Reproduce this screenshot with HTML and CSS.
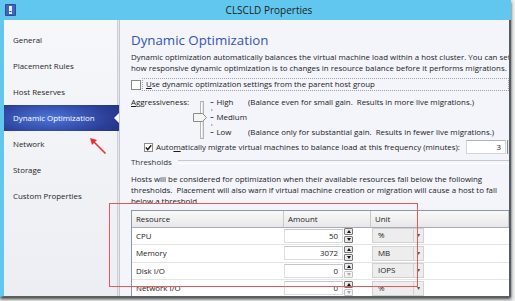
FILE: index.html
```html
<!DOCTYPE html>
<html lang="en">
<head>
  <meta charset="UTF-8" />
  <title>CLSCLD Properties</title>
  <link rel="stylesheet" href="styles.css">
</head>
<body>

  <div class="window">
    <div class="titlebar">
      <svg class="app-icon" width="11" height="12" viewBox="0 0 11 12">
        <rect x="0" y="0" width="11" height="12" rx="1" fill="#2c4d9e"/>
        <rect x="1" y="1" width="9" height="10" fill="#3f66c0"/>
        <rect x="4" y="2" width="3" height="8" fill="#e8eefa"/>
        <rect x="4.5" y="7" width="2" height="1" fill="#2c4d9e"/>
      </svg>
      <div class="title">CLSCLD Properties</div>
    </div>

    <div class="frame">
      <nav class="sidebar">
        <a href="#">General</a>
        <a href="#">Placement Rules</a>
        <a href="#">Host Reserves</a>
        <a href="#" class="active">Dynamic Optimization</a>
        <a href="#">Network</a>
        <a href="#">Storage</a>
        <a href="#">Custom Properties</a>
      </nav>
      <div class="splitter"></div>

      <main class="content">
        <h1>Dynamic Optimization</h1>
        <p class="intro">Dynamic optimization automatically balances the virtual machine load within a host cluster. You can set<br>how responsive dynamic optimization is to changes in resource balance before it performs migrations.</p>

        <div class="check-row">
          <span class="box"></span>
          <span class="focus"><u>U</u>se dynamic optimization settings from the parent host group</span>
        </div>

        <div class="aggr">
          <div class="aggr-label"><u>A</u>ggressiveness:</div>
          <svg class="slider" width="22" height="44" viewBox="0 0 22 44">
            <rect x="7.5" y="6.5" width="3" height="37" fill="#e4e4e4" stroke="#b4b4b4"/>
            <line x1="8.5" y1="7.5" x2="8.5" y2="42.5" stroke="#fff"/>
            <line x1="17.5" y1="7.5" x2="20.5" y2="7.5" stroke="#555"/>
            <line x1="18" y1="15" x2="19.5" y2="15" stroke="#777"/>
            <line x1="17.5" y1="22.5" x2="20.5" y2="22.5" stroke="#555"/>
            <line x1="18" y1="30" x2="19.5" y2="30" stroke="#777"/>
            <line x1="17.5" y1="37.5" x2="20.5" y2="37.5" stroke="#555"/>
            <polygon points="0.5,18.5 9.5,18.5 13.5,22.5 9.5,26.5 0.5,26.5" fill="#f4f4f4" stroke="#8a8a8a"/>
          </svg>
          <div class="levels">
            <div class="level"><span class="lvl">High</span><span>(Balance even for small gain.&nbsp; Results in more live migrations.)</span></div>
            <div class="level"><span class="lvl">Medium</span></div>
            <div class="level"><span class="lvl">Low</span><span>(Balance only for substantial gain.&nbsp; Results in fewer live migrations.)</span></div>
          </div>
        </div>

        <div class="auto-row">
          <span class="box checked">
            <svg width="7" height="7" viewBox="0 0 7 7"><polyline points="0.8,3.6 2.7,5.6 6.2,1.2" fill="none" stroke="#1a1a1a" stroke-width="1.4"/></svg>
          </span>
          <span>Auto<u>m</u>atically migrate virtual machines to balance load at this frequency (minutes):</span>
          <span class="freq">3</span>
          <span class="freq-spin"></span>
        </div>

        <div class="legend">Thresholds</div>

        <p class="hosts">Hosts will be considered for optimization when their available resources fall below the following<br>thresholds.&nbsp; Placement will also warn if virtual machine creation or migration will cause a host to fall<br>below a threshold.</p>

        <div class="grid" id="thresholds">
          <div class="th">Resource</div>
          <div class="th">Amount</div>
          <div class="th">Unit</div>
        </div>
      </main>
    </div>
  </div>

  <div class="highlight"></div>
  <svg class="arrow" width="24" height="24" viewBox="0 0 24 24">
    <line x1="19.5" y1="19.5" x2="7" y2="7" stroke="#e8322e" stroke-width="1.6"/>
    <polygon points="4,4 11,6 6,11" fill="#e8322e"/>
  </svg>

<script>
  const rows = [
    { name: 'CPU', amount: 50, unit: '%' },
    { name: 'Memory', amount: 3072, unit: 'MB' },
    { name: 'Disk I/O', amount: 0, unit: 'IOPS' },
    { name: 'Network I/O', amount: 0, unit: '%' }
  ];
  const grid = document.getElementById('thresholds');

  rows.forEach(row => {
    const atMin = row.amount === 0 ? ' disabled' : '';
    grid.insertAdjacentHTML('beforeend', `
      <div class="td">${row.name}</div>
      <div class="td amount">
        <span class="num">${row.amount}</span>
        <span class="spin${atMin}"><i class="up"></i><i class="down"></i></span>
      </div>
      <div class="td unit">
        <span class="combo"><span class="val">${row.unit}</span><span class="drop">&#9662;</span></span>
      </div>
    `);
  });
</script>

</body>
</html>
```

FILE: styles.css
```css
* {
  margin: 0;
  padding: 0;
  box-sizing: border-box;
}

body {
  width: 515px;
  height: 301px;
  overflow: hidden;
  position: relative;
  background: #eceded;
  font-family: "Open Sans", sans-serif;
  font-size: 7.9px;
  color: #1a1a1a;
}

.window {
  width: 511px;
  height: 297px;
  display: flex;
  flex-direction: column;
  background: #62c7ee;
  box-shadow: 0 2px 3px rgba(30, 34, 30, 0.85);
}

.titlebar {
  height: 20px;
  display: flex;
  align-items: center;
  padding-left: 5px;
}

.title {
  flex: 1;
  text-align: center;
  padding-left: 11px;
  font-size: 10px;
  color: #1c1c1c;
}

.frame {
  flex: 1;
  display: flex;
  border-left: 4px solid #62c7ee;
  border-right: 2px solid #555b62;
  border-bottom: 1px solid #5a6068;
  overflow: hidden;
}

.sidebar {
  width: 113px;
  padding-top: 7px;
  background: linear-gradient(#f6f7fa, #eceef3);
  display: flex;
  flex-direction: column;
}

.sidebar a {
  height: 26px;
  line-height: 26px;
  padding-left: 9px;
  color: #1e1e1e;
  text-decoration: none;
  white-space: nowrap;
}

.sidebar a.active {
  position: relative;
  z-index: 2;
  margin-right: -2px;
  color: #fff;
  background: radial-gradient(ellipse 70% 90% at 40% 50%, #4c76da, #2b3d96 75%, #24338a);
}

.sidebar a.active::after {
  content: "";
  position: absolute;
  right: 0;
  top: 8px;
  border-top: 5px solid transparent;
  border-bottom: 5px solid transparent;
  border-right: 5px solid #f8f9fc;
}

.splitter {
  width: 3px;
  background: linear-gradient(to right, #c2c5cd, #e4e6eb, #b6b9c2);
}

.content {
  flex: 1;
  background: #f4f5fb;
  padding-left: 11px;
  overflow: hidden;
}

h1 {
  margin-top: 11px;
  font-size: 13.3px;
  font-weight: 400;
  line-height: 18px;
  color: #3254b4;
}

.intro {
  margin-top: 3px;
  line-height: 11px;
  white-space: nowrap;
}

.box {
  width: 10px;
  height: 10px;
  background: #fff;
  border: 1px solid #8a8a8a;
  display: flex;
  align-items: center;
  justify-content: center;
  flex-shrink: 0;
}

.check-row {
  margin-top: 4px;
  height: 13px;
  display: flex;
  align-items: center;
  gap: 1px;
  white-space: nowrap;
}

.check-row .focus {
  flex: 1;
  height: 13px;
  line-height: 11px;
  padding-left: 3px;
  border: 1px dotted #a0a0a6;
}

.aggr {
  margin-top: 4px;
  height: 44px;
  display: flex;
  white-space: nowrap;
}

.aggr-label {
  width: 62px;
  line-height: 15px;
}

.levels {
  display: flex;
  flex-direction: column;
}

.level {
  height: 15px;
  line-height: 15px;
  display: flex;
}

.level:last-child {
  height: 14px;
}

.lvl {
  width: 33px;
  padding-left: 1.5px;
}

.auto-row {
  margin-top: 1px;
  height: 14px;
  padding-left: 13px;
  display: flex;
  align-items: center;
  gap: 3px;
  white-space: nowrap;
}

.auto-row .box {
  width: 9px;
  height: 9px;
}

.freq {
  margin-left: auto;
  width: 40px;
  height: 14px;
  line-height: 12px;
  text-align: right;
  padding-right: 4px;
  background: #fff;
  border: 1px solid #d2d5dc;
  border-top-color: #aeb1b8;
}

.freq-spin {
  width: 2px;
  height: 14px;
  margin-left: -2px;
  border-left: 1px solid #8a8a8a;
  background: #e6e6e6;
}

.legend {
  margin-top: 2px;
  height: 12px;
  display: flex;
  align-items: center;
  color: #333;
}

.legend::after {
  content: "";
  flex: 1;
  height: 2px;
  margin-left: 6px;
  border-top: 1px solid #c6c9d3;
  border-bottom: 1px solid #fff;
}

.hosts {
  margin-top: 5.5px;
  line-height: 11px;
  white-space: nowrap;
}

.grid {
  margin-top: 3px;
  display: grid;
  grid-template-columns: 152px 87px 1fr;
  grid-template-rows: 17px repeat(4, 17.5px);
  border-top: 1px solid #8d98a6;
  border-left: 1px solid #8d98a6;
  background: #fff;
}

.th {
  padding-left: 4px;
  line-height: 16px;
  background: linear-gradient(#f9f9f9, #e8e8ea);
  border-right: 1px solid #c9c9cc;
  border-bottom: 1px solid #a9abb0;
  color: #222;
}

.td {
  padding-left: 4px;
  display: flex;
  align-items: center;
  border-bottom: 1px solid #e4e4e6;
}

.td.amount,
.td.unit {
  padding-left: 0;
}

.num {
  width: 59px;
  height: 14px;
  line-height: 12px;
  text-align: right;
  padding-right: 4px;
  background: #fff;
  border: 1px solid #dcdde2;
  border-top-color: #c4c6cc;
}

.spin {
  width: 9px;
  height: 15px;
  margin-left: 1px;
  display: flex;
  flex-direction: column;
  gap: 1px;
}

.spin i {
  flex: 1;
  background: #e9e9e9;
  border: 1px solid #777;
  border-radius: 1px;
  display: flex;
  align-items: center;
  justify-content: center;
}

.spin i::after {
  content: "";
  border-left: 2.5px solid transparent;
  border-right: 2.5px solid transparent;
}

.spin .up::after {
  border-bottom: 3px solid #111;
}

.spin .down::after {
  border-top: 3px solid #111;
}

.spin.disabled .down {
  background: #f4f4f4;
  border-color: #c4c4c4;
}

.spin.disabled .down::after {
  border-top-color: #a8a8a8;
}

.combo {
  width: 52px;
  height: 15px;
  margin-left: 1px;
  display: flex;
  background: #ededed;
  border: 1px solid #d2d2d2;
}

.combo .val {
  flex: 1;
  padding-left: 5px;
  line-height: 13px;
}

.combo .drop {
  width: 10px;
  border-left: 1px solid #d2d2d2;
  font-size: 6px;
  line-height: 13px;
  text-align: center;
  color: #555;
}

.highlight {
  position: absolute;
  left: 109px;
  top: 203px;
  width: 309px;
  height: 84px;
  border: 1px solid #e6585c;
  pointer-events: none;
}

.arrow {
  position: absolute;
  left: 86px;
  top: 134px;
}
```
